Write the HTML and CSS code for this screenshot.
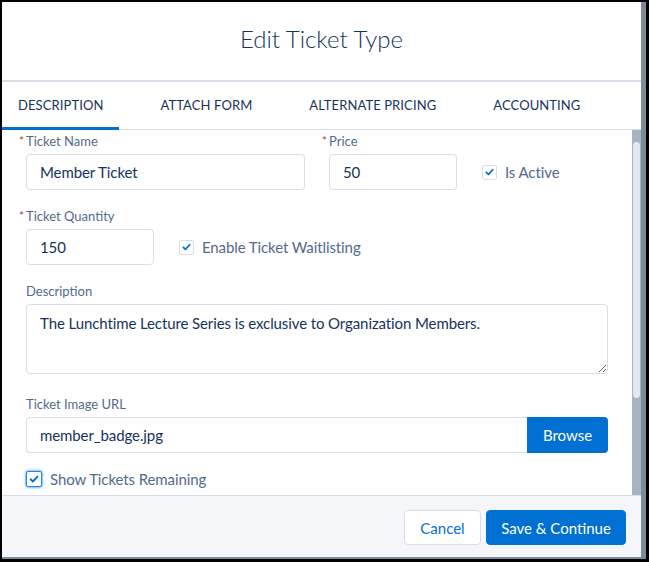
FILE: index.html
```html
<!DOCTYPE html>
<html>
<head>
<meta charset="utf-8">
<link rel="stylesheet" href="styles.css">
</head>
<body>
<div class="modal">
  <header class="modal-header">
    <h2 class="title">Edit Ticket Type</h2>
  </header>
  <nav class="tabs">
    <a class="tab active">Description</a>
    <a class="tab">Attach Form</a>
    <a class="tab">Alternate Pricing</a>
    <a class="tab">Accounting</a>
  </nav>
  <div class="body">
    <div class="content">
      <div class="row">
        <div class="field f-name">
          <label class="label"><abbr class="req">*</abbr>Ticket Name</label>
          <input class="input" type="text" value="Member Ticket">
        </div>
        <div class="field f-small">
          <label class="label"><abbr class="req">*</abbr>Price</label>
          <input class="input" type="text" value="50">
        </div>
        <div class="check-wrap">
          <span class="checkbox"><svg viewBox="0 0 14 14" width="14" height="14"><path d="M3.6 7.3 L5.9 9.5 L10.4 4.6" fill="none" stroke="#0070d2" stroke-width="1.9" stroke-linecap="round" stroke-linejoin="round"/></svg></span>
          <span class="check-label">Is Active</span>
        </div>
      </div>
      <div class="row gap-row">
        <div class="field f-small">
          <label class="label"><abbr class="req">*</abbr>Ticket Quantity</label>
          <input class="input" type="text" value="150">
        </div>
        <div class="check-wrap">
          <span class="checkbox"><svg viewBox="0 0 14 14" width="14" height="14"><path d="M3.6 7.3 L5.9 9.5 L10.4 4.6" fill="none" stroke="#0070d2" stroke-width="1.9" stroke-linecap="round" stroke-linejoin="round"/></svg></span>
          <span class="check-label">Enable Ticket Waitlisting</span>
        </div>
      </div>
      <div class="field gap-row">
        <label class="label">Description</label>
        <textarea class="textarea">The Lunchtime Lecture Series is exclusive to Organization Members.</textarea>
      </div>
      <div class="field gap-row2">
        <label class="label">Ticket Image URL</label>
        <div class="group">
          <input class="input group-input" type="text" value="member_badge.jpg">
          <button class="btn-browse">Browse</button>
        </div>
      </div>
      <div class="check-wrap show-row">
        <span class="checkbox focus"><svg viewBox="0 0 14 14" width="14" height="14"><path d="M3.6 7.3 L5.9 9.5 L10.4 4.6" fill="none" stroke="#0070d2" stroke-width="1.9" stroke-linecap="round" stroke-linejoin="round"/></svg></span>
        <span class="check-label">Show Tickets Remaining</span>
      </div>
    </div>
    <div class="scrollbar"><div class="thumb"></div></div>
  </div>
  <footer class="footer">
    <button class="btn btn-neutral">Cancel</button>
    <button class="btn btn-brand">Save &amp; Continue</button>
  </footer>
</div>
</body>
</html>
```
FILE: styles.css
```css
* { box-sizing: border-box; }
html, body { margin: 0; padding: 0; }
body {
  background: #000;
  width: 649px;
  height: 562px;
  overflow: hidden;
  font-family: Lato, "Liberation Sans", sans-serif;
  color: #16325c;
}
.modal {
  margin: 2px 0 0 2px;
  width: 644px;
  height: 557px;
  background: #fff;
  border-right: 5px solid #7d8b99;
  border-bottom: 2px solid #7d8b99;
  display: flex;
  flex-direction: column;
}
.modal-header {
  height: 80px;
  border-bottom: 2px solid #d8dde6;
  display: flex;
  align-items: center;
  justify-content: center;
}
.title {
  margin: 0;
  font-size: 24px;
  font-weight: 300;
  color: #16325c;
  padding-bottom: 5px;
}
.tabs {
  height: 48px;
  border-bottom: 1px solid #d8dde6;
  display: flex;
  gap: 25px;
}
.tab {
  padding: 0 16px;
  display: flex;
  align-items: center;
  font-size: 13px;
  text-transform: uppercase;
  letter-spacing: 0.1px;
  color: #16325c;
  border-bottom: 3px solid transparent;
  margin-bottom: -1px;
  padding-top: 1px;
}
.tab.active { border-bottom-color: #0070d2; }
.body {
  flex: 1;
  display: flex;
  min-height: 0;
}
.content {
  flex: 1;
  padding: 2px 24px 0 24px;
}
.scrollbar {
  width: 9px;
  background: #a6b3c2;
  padding: 12px 1px 0 1px;
}
.thumb {
  height: 256px;
  background: #e3e8ef;
  border-radius: 4px;
}
.row {
  display: flex;
  align-items: flex-end;
  gap: 24px;
}
.gap-row { margin-top: 17px; }
.gap-row2 { margin-top: 21px; }
.field { display: flex; flex-direction: column; }
.f-name { width: 279px; }
.f-small { width: 128px; }
.label {
  display: block;
  height: 18px;
  font-size: 13px;
  line-height: 18px;
  color: #54698d;
  margin-bottom: 4px;
  white-space: nowrap;
}
.req {
  display: inline-block;
  width: 7px;
  margin-left: -7px;
  color: #c23934;
  font-size: 12px;
  line-height: 18px;
  vertical-align: top;
  text-decoration: none;
}
.input {
  height: 36px;
  border: 1px solid #d8dde6;
  border-radius: 4px;
  padding: 0 13px;
  font-family: Lato, "Liberation Sans", sans-serif;
  font-size: 15px;
  letter-spacing: -0.1px;
  color: #16325c;
  background: #fff;
  outline: none;
  width: 100%;
}
.check-wrap {
  height: 36px;
  display: flex;
  align-items: center;
  gap: 8px;
  margin-left: 1px;
}
.checkbox {
  width: 15px;
  height: 15px;
  border: 1px solid #d8dde6;
  border-radius: 2px;
  display: flex;
  align-items: center;
  justify-content: center;
  background: #fff;
}
.checkbox svg { display: block; }
.checkbox.focus {
  width: 16px;
  height: 16px;
  border-color: #1589ee;
  box-shadow: 0 0 3px #0070d2;
}
.check-label {
  font-size: 15px;
  letter-spacing: -0.1px;
  color: #54698d;
}
.textarea {
  width: 582px;
  height: 70px;
  border: 1px solid #d8dde6;
  border-radius: 4px;
  padding: 7px 13px;
  font-family: Lato, "Liberation Sans", sans-serif;
  font-size: 15px;
  letter-spacing: -0.1px;
  line-height: 22px;
  color: #16325c;
  resize: vertical;
  outline: none;
}
.group {
  display: flex;
  width: 582px;
}
.group-input {
  flex: 1;
  border-radius: 4px 0 0 4px;
  border-right: none;
}
.btn-browse {
  width: 81px;
  height: 36px;
  border: none;
  background: #0070d2;
  color: #fff;
  border-radius: 0 4px 4px 0;
  font-family: Lato, "Liberation Sans", sans-serif;
  font-size: 15px;
}
.show-row {
  margin-top: 10px;
  margin-left: 0;
  height: 32px;
}
.footer {
  height: 62px;
  background: #f4f6f9;
  border-top: 1px solid #d8dde6;
  display: flex;
  justify-content: flex-end;
  align-items: flex-start;
  gap: 5px;
  padding: 14px 15px 0 0;
}
.btn {
  height: 35px;
  border-radius: 4px;
  font-family: Lato, "Liberation Sans", sans-serif;
  font-size: 15px;
  padding: 0;
}
.btn-neutral {
  width: 77px;
  background: #fff;
  border: 1px solid #d8dde6;
  color: #0070d2;
}
.btn-brand {
  width: 140px;
  background: #0070d2;
  border: 1px solid #0070d2;
  color: #fff;
}
```
